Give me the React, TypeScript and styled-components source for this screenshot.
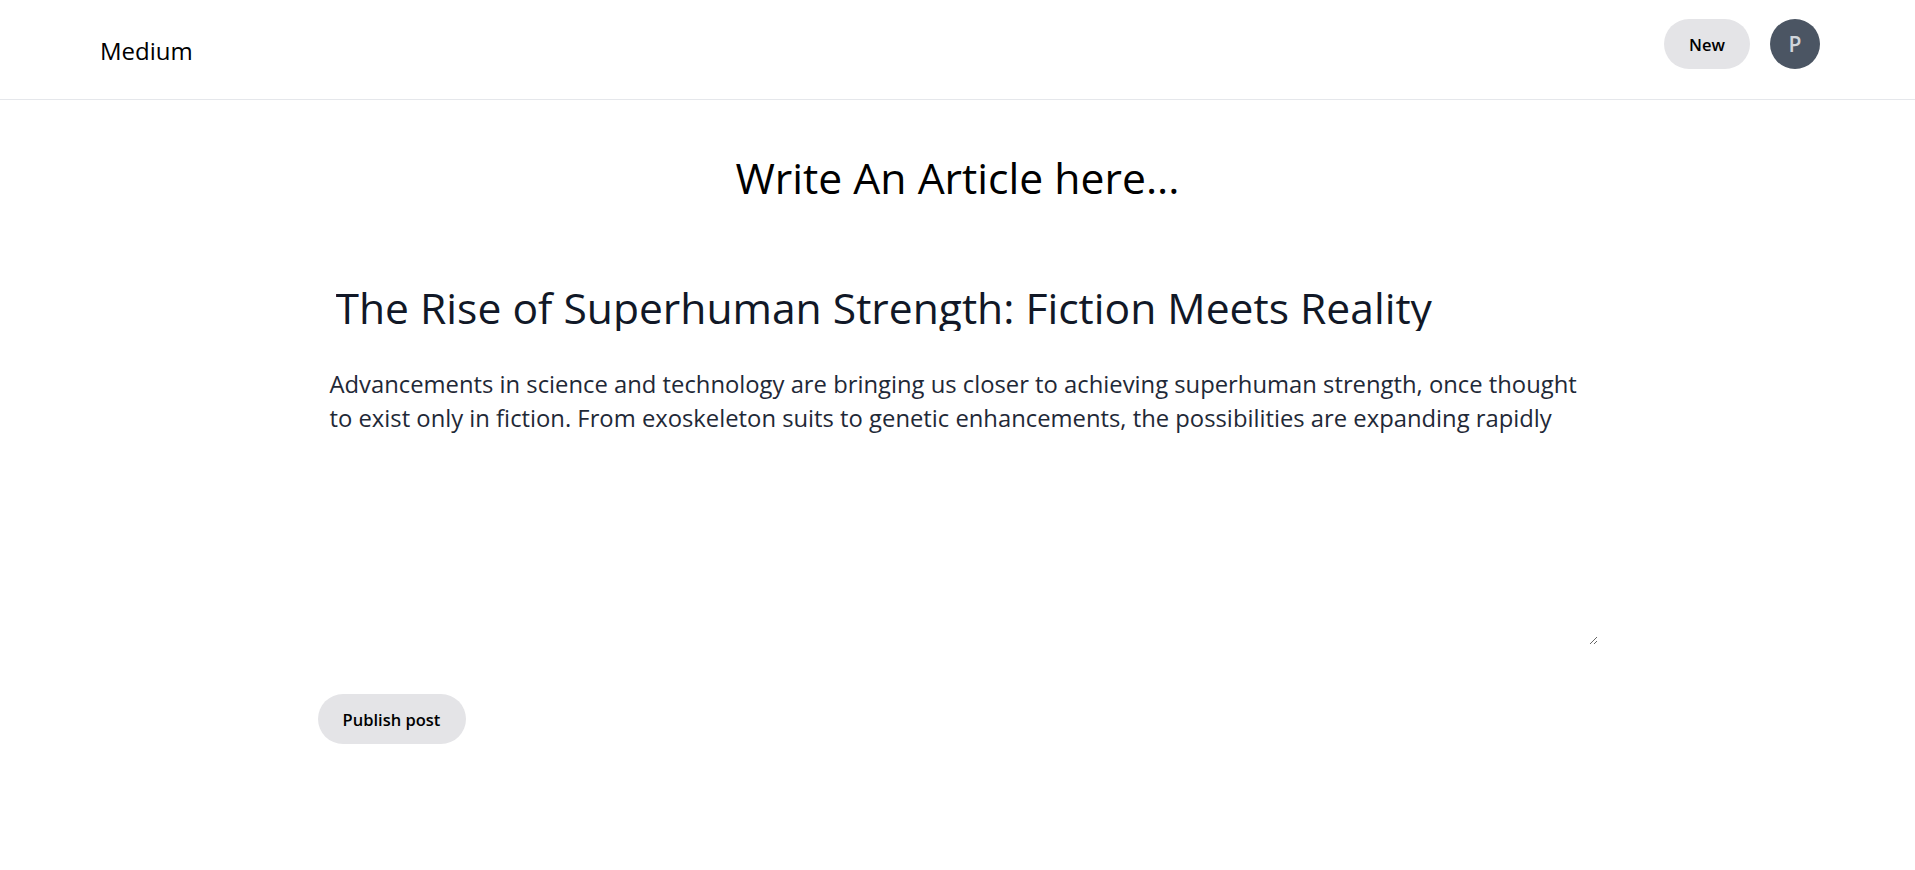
import React, { useEffect, useRef, useState } from "react";
import styled, { createGlobalStyle } from "styled-components";

const GlobalStyle = createGlobalStyle`
  * { box-sizing: border-box; }
  html, body { margin: 0; padding: 0; background: #ffffff; }
  body { font-family: "Open Sans", "Noto Sans", sans-serif; color: #000; }
`;

const Header = styled.header`
  display: flex;
  justify-content: space-between;
  align-items: flex-start;
  height: 100px;
  padding: 19px 95px 0 100px;
  border-bottom: 1px solid #e5e7eb;
`;

const Brand = styled.div`
  margin-top: 15px;
  font-size: 24px;
  line-height: 34px;
  color: #000;
`;

const Actions = styled.div`
  display: flex;
  align-items: center;
  gap: 20px;
`;

const PillButton = styled.button<{ $w: number }>`
  width: ${(p) => p.$w}px;
  height: 50px;
  border: none;
  border-radius: 999px;
  background: #e4e4e7;
  color: #000;
  font-family: "Open Sans", "Noto Sans", sans-serif;
  font-size: 16.5px;
  font-weight: 600;
  cursor: pointer;
  padding: 0;
`;

const Avatar = styled.div`
  width: 50px;
  height: 50px;
  border-radius: 50%;
  background: #4b5563;
  color: #d1d5db;
  display: flex;
  align-items: center;
  justify-content: center;
  font-size: 21px;
  font-weight: 600;
`;

const Main = styled.main`
  max-width: 1280px;
  margin: 0 auto;
  display: flex;
  flex-direction: column;
`;

const PageTitle = styled.h1`
  margin: 51px 0 0;
  text-align: center;
  font-size: 42.7px;
  line-height: 53px;
  font-weight: 400;
  color: #000;
`;

const TitleInput = styled.input`
  margin-top: 79px;
  width: 100%;
  border: none;
  outline: none;
  background: transparent;
  padding: 0 0 0 18px;
  height: 48px;
  font-family: "Open Sans", "Noto Sans", sans-serif;
  font-size: 42.6px;
  line-height: 47px;
  color: #111827;
`;

const BodyArea = styled.textarea`
  margin-top: 31px;
  width: 100%;
  height: 283px;
  border: none;
  outline: none;
  background: transparent;
  padding: 5px 12px;
  font-family: "Open Sans", "Noto Sans", sans-serif;
  font-size: 23.8px;
  line-height: 34px;
  color: #1f2937;
  caret-color: #000;
`;

const Footer = styled.div`
  margin-top: 49px;
`;

const PublishButton = styled(PillButton)``;

const initialTitle = "The Rise of Superhuman Strength: Fiction Meets Reality";
const initialBody =
  "Advancements in science and technology are bringing us closer to achieving superhuman strength, once thought to exist only in fiction. From exoskeleton suits to genetic enhancements, the possibilities are expanding rapidly";

export default function App() {
  const [title, setTitle] = useState(initialTitle);
  const [body, setBody] = useState(initialBody);
  const ref = useRef<HTMLTextAreaElement>(null);

  useEffect(() => {
    const el = ref.current;
    if (el) {
      el.focus();
      el.setSelectionRange(el.value.length, el.value.length);
    }
  }, []);

  return (
    <>
      <GlobalStyle />
      <Header>
        <Brand>Medium</Brand>
        <Actions>
          <PillButton $w={86}>New</PillButton>
          <Avatar>P</Avatar>
        </Actions>
      </Header>
      <Main>
        <PageTitle>Write An Article here...</PageTitle>
        <TitleInput value={title} onChange={(e) => setTitle(e.target.value)} />
        <BodyArea ref={ref} value={body} onChange={(e) => setBody(e.target.value)} />
        <Footer>
          <PublishButton $w={148}>Publish post</PublishButton>
        </Footer>
      </Main>
    </>
  );
}
